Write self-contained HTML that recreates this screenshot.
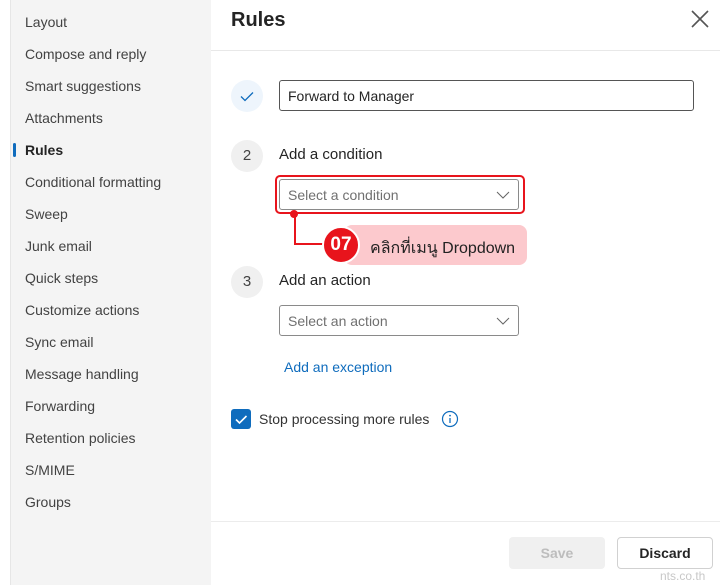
<!DOCTYPE html>
<html><head><meta charset="utf-8"><style>
*{margin:0;padding:0;box-sizing:border-box}
body{width:720px;height:585px;overflow:hidden;font-family:"Liberation Sans","Noto Sans CJK SC",sans-serif;background:#fff;position:relative;color:#242424}
.side{position:absolute;left:10px;top:0;width:201px;height:585px;background:#f4f4f4;border-left:1px solid #e6e6e6}
.side div{position:absolute;left:14px;font-size:14px;color:#424242}
.side .act{font-weight:bold;color:#242424}
.side .bar{position:absolute;left:2px;top:143px;width:3px;height:14px;background:#0f6cbd;border-radius:2px}
.a{position:absolute}
.circ{position:absolute;width:32px;height:32px;border-radius:50%;background:#f0f0f0;text-align:center;line-height:32px;font-size:15px;color:#424242}
.inp{position:absolute;border:1px solid #8a8a8a;border-radius:3px;font-size:14px;padding-left:8px;line-height:28px}
.sel{color:#707070;border-color:#8a8a8a}
</style></head><body>
<div class="side">
<div style="top:14px">Layout</div>
<div style="top:46px">Compose and reply</div>
<div style="top:78px">Smart suggestions</div>
<div style="top:110px">Attachments</div>
<div class="bar"></div>
<div class="act" style="top:142px">Rules</div>
<div style="top:174px">Conditional formatting</div>
<div style="top:206px">Sweep</div>
<div style="top:238px">Junk email</div>
<div style="top:270px">Quick steps</div>
<div style="top:302px">Customize actions</div>
<div style="top:334px">Sync email</div>
<div style="top:366px">Message handling</div>
<div style="top:398px">Forwarding</div>
<div style="top:430px">Retention policies</div>
<div style="top:462px">S/MIME</div>
<div style="top:494px">Groups</div>
</div>
<div class="a" style="left:231px;top:9px;font-size:20px;font-weight:bold">Rules</div>
<svg class="a" style="left:690px;top:9px" width="20" height="20"><path d="M2 2L18 18M18 2L2 18" stroke="#555" stroke-width="1.6"/></svg>
<div class="a" style="left:211px;top:50px;width:509px;height:1px;background:#e8e8e8"></div>
<div class="circ" style="left:231px;top:80px;background:#eef5fc"><svg width="32" height="32"><path d="M10 16.5l4 4 8-8" stroke="#0f6cbd" stroke-width="1.3" fill="none"/></svg></div>
<div class="inp" style="left:279px;top:80px;width:415px;height:31px;border-color:#555;line-height:30px">Forward to Manager</div>
<div class="circ" style="left:231px;top:140px">2</div>
<div class="a" style="left:279px;top:146px;font-size:15px">Add a condition</div>
<div class="a" style="left:275px;top:175px;width:250px;height:39px;border:2px solid #e8141c;border-radius:5px"></div>
<div class="inp sel" style="left:279px;top:179px;width:240px;height:31px;line-height:31px">Select a condition</div>
<svg class="a" style="left:496px;top:190px" width="14" height="10"><path d="M1 2l6 6 6-6" stroke="#666" fill="none"/></svg>
<div class="a" style="left:294px;top:214px;width:2px;height:31px;background:#e8141c"></div>
<div class="a" style="left:294px;top:243px;width:40px;height:2px;background:#e8141c"></div>
<div class="a" style="left:290px;top:210px;width:8px;height:8px;border-radius:50%;background:#e8141c"></div>
<div class="a" style="left:344px;top:225px;width:183px;height:40px;background:#fcc9cd;border-radius:8px"></div>
<div class="a" style="left:322px;top:226px;width:38px;height:38px;border-radius:50%;background:#e8141c;border:2px solid #fff;color:#fff;font-weight:bold;font-size:19px;text-align:center;line-height:34px">07</div>
<div class="a" style="left:370px;top:236px;font-size:16px;color:#222">คลิกที่เมนู Dropdown</div>
<div class="circ" style="left:231px;top:266px">3</div>
<div class="a" style="left:279px;top:272px;font-size:15px">Add an action</div>
<div class="inp sel" style="left:279px;top:305px;width:240px;height:31px;line-height:31px">Select an action</div>
<svg class="a" style="left:496px;top:316px" width="14" height="10"><path d="M1 2l6 6 6-6" stroke="#666" fill="none"/></svg>
<div class="a" style="left:284px;top:359px;font-size:14px;color:#0f6cbd">Add an exception</div>
<div class="a" style="left:231px;top:409px;width:20px;height:20px;background:#0f6cbd;border-radius:3px"><svg width="20" height="20"><path d="M5 10.5l3.5 3.5 7-7" stroke="#fff" stroke-width="1.6" fill="none"/></svg></div>
<div class="a" style="left:259px;top:411px;font-size:14px;color:#333">Stop processing more rules</div>
<svg class="a" style="left:441px;top:410px" width="18" height="18"><circle cx="9" cy="9" r="7.5" stroke="#0f6cbd" fill="none" stroke-width="1.2"/><path d="M9 8v5" stroke="#0f6cbd" stroke-width="1.3"/><circle cx="9" cy="5.6" r=".9" fill="#0f6cbd"/></svg>
<div class="a" style="left:211px;top:521px;width:509px;height:1px;background:#ececec"></div>
<div class="a" style="left:509px;top:537px;width:96px;height:32px;background:#f0f0f0;border-radius:4px;color:#bdbdbd;font-weight:bold;font-size:14px;text-align:center;line-height:32px">Save</div>
<div class="a" style="left:617px;top:537px;width:96px;height:32px;border:1px solid #d1d1d1;border-radius:4px;font-weight:bold;font-size:14px;text-align:center;line-height:30px">Discard</div>
<div class="a" style="left:660px;top:569px;font-size:12px;color:#c8c8c8">nts.co.th</div>
</body></html>
